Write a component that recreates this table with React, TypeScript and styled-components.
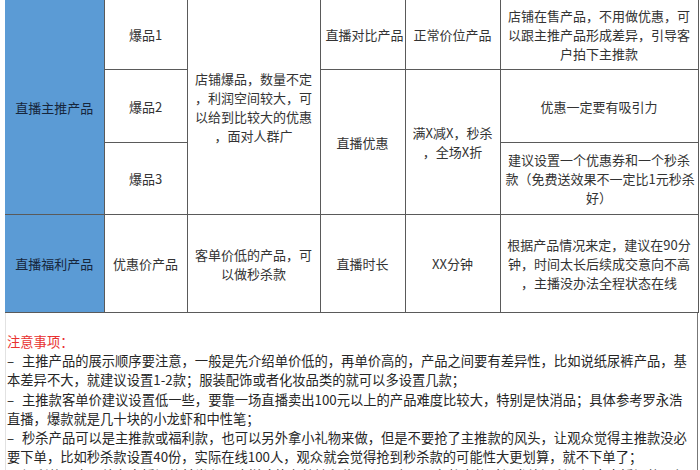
import React from "react";
import styled, { createGlobalStyle } from "styled-components";

const GlobalStyle = createGlobalStyle`
  html, body {
    margin: 0;
    padding: 0;
    background: #fff;
  }
  body {
    font-family: "Noto Sans CJK SC", "Noto Sans", sans-serif;
    overflow: hidden;
  }
`;

// 每个单元格的文字都按原图手动断行
const Lines = ({ lines }: { lines: string[] }) => (
  <>
    {lines.map((l, i) => (
      <Line key={i}>{l}</Line>
    ))}
  </>
);

// 以 "-" 开头的是新的一条，其余是上一条的换行
const notes = [
  "-主推产品的展示顺序要注意，一般是先介绍单价低的，再单价高的，产品之间要有差异性，比如说纸尿裤产品，基",
  "本差异不大，就建议设置1-2款；服装配饰或者化妆品类的就可以多设置几款；",
  "-主推款客单价建议设置低一些，要靠一场直播卖出100元以上的产品难度比较大，特别是快消品；具体参考罗永浩",
  "直播，爆款就是几十块的小龙虾和中性笔；",
  "-秒杀产品可以是主推款或福利款，也可以另外拿小礼物来做，但是不要抢了主推款的风头，让观众觉得主推款没必",
  "要下单，比如秒杀款设置40份，实际在线100人，观众就会觉得抢到秒杀款的可能性大更划算，就不下单了；",
  "-福利款一定要放在直播间的前半段，这样才能有效地留住观众，也可以在整点的时候发放福利，提高直播间的人气；",
];

const App = () => {
  return (
    <Page>
      <GlobalStyle />
      <Table>
        <colgroup>
          <col style={{ width: 99 }} />
          <col style={{ width: 83 }} />
          <col style={{ width: 133 }} />
          <col style={{ width: 85 }} />
          <col style={{ width: 95 }} />
          <col style={{ width: 198 }} />
        </colgroup>
        <tbody>
          <Row h={70}>
            <Cell rowSpan={3} blue>
              直播主推产品
            </Cell>
            <Cell>爆品1</Cell>
            <Cell rowSpan={3}>
              <Lines
                lines={[
                  "店铺爆品，数量不定",
                  "，利润空间较大，可",
                  "以给到比较大的优惠",
                  "，面对人群广",
                ]}
              />
            </Cell>
            <Cell>直播对比产品</Cell>
            <Cell>正常价位产品</Cell>
            <Cell>
              <Lines
                lines={[
                  "店铺在售产品，不用做优惠，可",
                  "以跟主推产品形成差异，引导客",
                  "户拍下主推款",
                ]}
              />
            </Cell>
          </Row>
          <Row h={73}>
            <Cell>爆品2</Cell>
            <Cell rowSpan={2}>直播优惠</Cell>
            <Cell rowSpan={2}>
              <Lines lines={["满X减X，秒杀", "，全场X折"]} />
            </Cell>
            <Cell>优惠一定要有吸引力</Cell>
          </Row>
          <Row h={72}>
            <Cell>爆品3</Cell>
            <Cell>
              <Lines
                lines={[
                  "建议设置一个优惠券和一个秒杀",
                  "款（免费送效果不一定比1元秒杀",
                  "好）",
                ]}
              />
            </Cell>
          </Row>
          <Row h={98}>
            <Cell blue>直播福利产品</Cell>
            <Cell>优惠价产品</Cell>
            <Cell>
              <Lines lines={["客单价低的产品，可", "以做秒杀款"]} />
            </Cell>
            <Cell>直播时长</Cell>
            <Cell>XX分钟</Cell>
            <Cell>
              <Lines
                lines={[
                  "根据产品情况来定，建议在90分",
                  "钟，时间太长后续成交意向不高",
                  "，主播没办法全程状态在线",
                ]}
              />
            </Cell>
          </Row>
        </tbody>
      </Table>
      <Notes>
        <NoteTitle>注意事项：</NoteTitle>
        {notes.map((n, i) =>
          n.startsWith("-") ? (
            <NoteLine key={i}>
              <Dash>–</Dash>
              {n.slice(1)}
            </NoteLine>
          ) : (
            <NoteLine key={i}>{n}</NoteLine>
          )
        )}
      </Notes>
    </Page>
  );
};

const Page = styled.div`
  width: 700px;
  height: 470px;
  padding-left: 5px;
  box-sizing: border-box;
  overflow: hidden;
  background: #fff;
`;

const Table = styled.table`
  width: 693px;
  margin-top: -1px;
  border-collapse: collapse;
  table-layout: fixed;
`;

interface RowProps {
  h: number;
}
const Row = styled.tr<RowProps>`
  height: ${({ h }) => h}px;
`;

interface CellProps {
  blue?: boolean;
}
const Cell = styled.td<CellProps>`
  border: 1px solid #5a5a5a;
  padding: 0 5px;
  text-align: center;
  vertical-align: middle;
  font-size: 13px;
  line-height: 19px;
  color: ${({ blue }) => (blue ? "#16263c" : "#333")};
  background: ${({ blue }) => (blue ? "#5b9bd5" : "#fff")};
  white-space: nowrap;

  &:first-child {
    border-left: none;
  }
`;

const Line = styled.span`
  display: block;
`;

const Notes = styled.div`
  width: 693px;
  box-sizing: border-box;
  border-left: 1px solid #e2e2e2;
  border-right: 1px solid #777;
  padding: 19px 0 0 1px;
  height: 200px;
  font-size: 13.3px;
  line-height: 19.2px;
  color: #262626;
`;

const NoteTitle = styled.div`
  color: #e8312f;
`;

const NoteLine = styled.div`
  white-space: nowrap;
`;

const Dash = styled.span`
  display: inline-block;
  width: 15px;
`;

export default App;
